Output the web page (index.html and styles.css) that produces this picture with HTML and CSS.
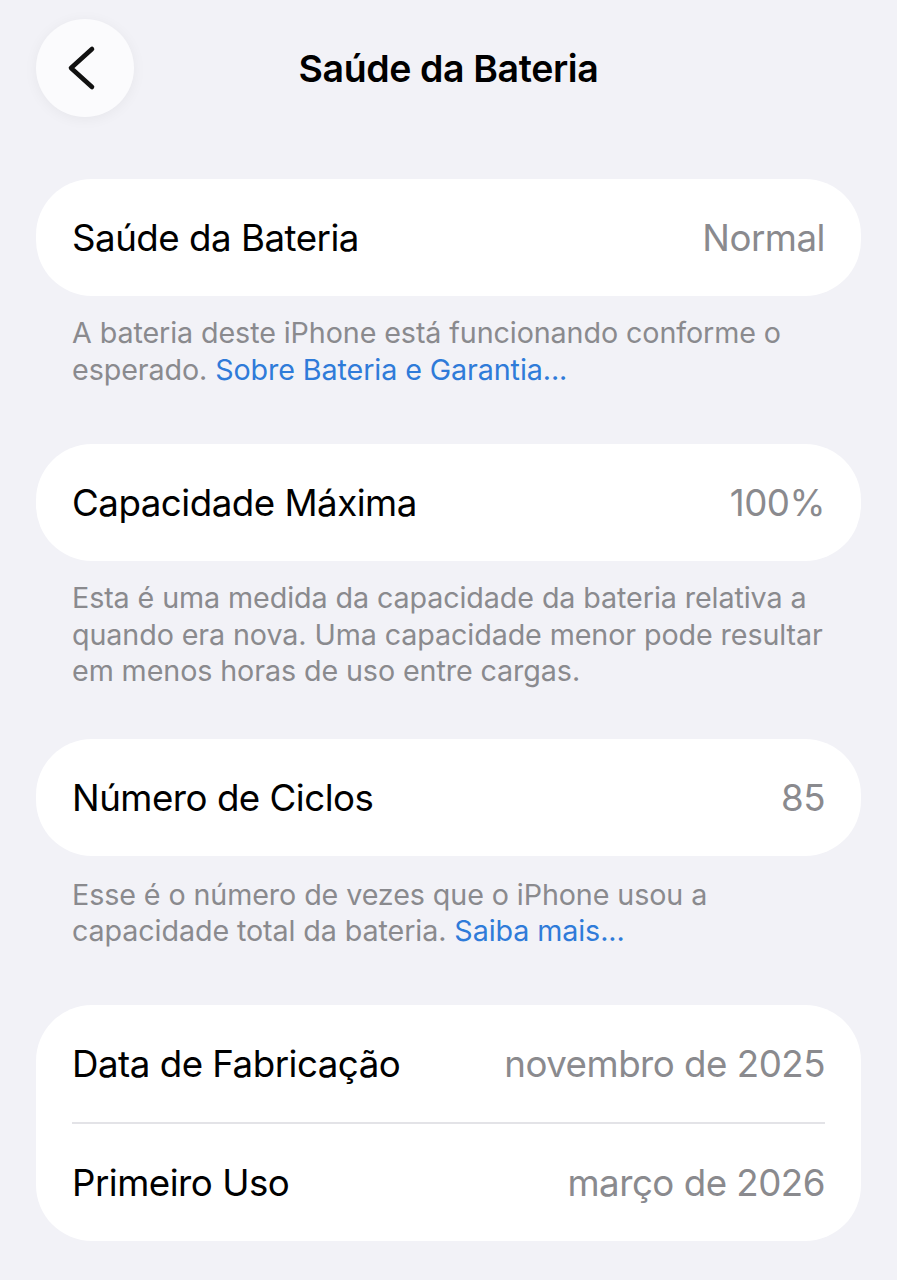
FILE: index.html
```html
<!DOCTYPE html>
<html lang="pt-BR">
<head>
<meta charset="utf-8">
<title>Saúde da Bateria</title>
<link rel="stylesheet" href="styles.css">
</head>
<body>
<div class="page">
  <header class="nav">
    <button class="back" aria-label="Voltar">
      <svg width="98" height="98" viewBox="0 0 98 98" aria-hidden="true">
        <path d="M56 30 L35 49 L56 68" fill="none" stroke="#111" stroke-width="4.6" stroke-linecap="round" stroke-linejoin="round"/>
      </svg>
    </button>
    <h1 class="title">Saúde da Bateria</h1>
  </header>

  <section class="group g1">
    <div class="card">
      <div class="row"><span class="label">Saúde da Bateria</span><span class="value">Normal</span></div>
    </div>
    <p class="footer">A bateria deste iPhone está funcionando conforme o esperado. <a class="link" href="#">Sobre Bateria e Garantia...</a></p>
  </section>

  <section class="group g2">
    <div class="card">
      <div class="row"><span class="label">Capacidade Máxima</span><span class="value">100%</span></div>
    </div>
    <p class="footer">Esta é uma medida da capacidade da bateria relativa a quando era nova. Uma capacidade menor pode resultar em menos horas de uso entre cargas.</p>
  </section>

  <section class="group g3">
    <div class="card">
      <div class="row"><span class="label">Número de Ciclos</span><span class="value">85</span></div>
    </div>
    <p class="footer f3">Esse é o número de vezes que o iPhone usou a capacidade total da bateria. <a class="link" href="#">Saiba mais...</a></p>
  </section>

  <section class="group g4">
    <div class="card">
      <div class="row"><span class="label">Data de Fabricação</span><span class="value">novembro de 2025</span></div>
      <div class="sep"></div>
      <div class="row"><span class="label">Primeiro Uso</span><span class="value">março de 2026</span></div>
    </div>
  </section>
</div>
</body>
</html>
```

FILE: styles.css
```css
* { box-sizing: border-box; }
html, body { margin: 0; padding: 0; }
body {
  background: #f2f2f7;
  font-family: Inter, "Liberation Sans", Arial, sans-serif;
  color: #000;
  width: 897px;
  height: 1280px;
  overflow: hidden;
}
.page { padding: 19px 36px 0 36px; }
.nav {
  display: grid;
  grid-template-columns: 98px 1fr 98px;
  align-items: center;
  height: 98px;
}
.back {
  width: 98px;
  height: 98px;
  border-radius: 50%;
  border: none;
  padding: 0;
  background: #fbfbfd;
  box-shadow: 0 2px 14px rgba(0,0,0,0.05);
  display: flex;
  align-items: center;
  justify-content: center;
}
.title {
  margin: 0;
  text-align: center;
  font-size: 37.5px;
  font-weight: 600;
  letter-spacing: -0.4px;
  color: #000;
}
.g1 { margin-top: 62px; }
.g2 { margin-top: 56px; }
.g3 { margin-top: 49px; }
.g4 { margin-top: 55px; }
.card {
  background: #fff;
  border-radius: 56px;
  padding: 0 36px;
}
.row {
  display: flex;
  justify-content: space-between;
  align-items: center;
  height: 117px;
  font-size: 36.7px;
  letter-spacing: -0.5px;
}
.label { color: #000; }
.value { color: #8a8a8e; }
.sep {
  height: 2px;
  background: #e3e3e7;
}
.footer {
  margin: 19px 0 0 0;
  padding: 0 36px;
  font-size: 28.7px;
  line-height: 36.5px;
  color: #8a8a8e;
  letter-spacing: -0.1px;
}
.footer.f3 { margin-top: 21px; }
.link { color: #2f7bd9; text-decoration: none; }
```
